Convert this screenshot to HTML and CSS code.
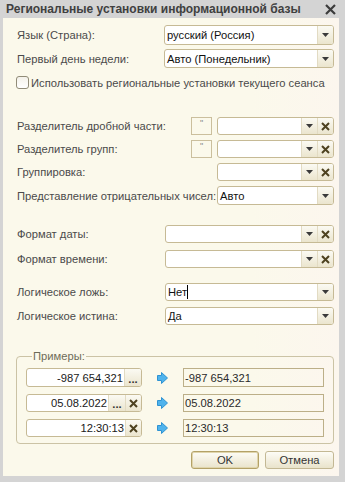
FILE: index.html
```html
<!DOCTYPE html>
<html>
  <head>
    <title>Региональные установки информационной базы</title>
    <link rel="stylesheet" href="styles.css">
  </head>
  <body>
    <div class="window">
      <div class="titlebar">
        <span class="title">Региональные установки информационной базы</span>
        <svg class="close" width="11" height="11" viewBox="0 0 11 11">
          <path d="M1 1l9 9M10 1l-9 9" stroke="#3c3c3c" stroke-width="2.2" />
        </svg>
      </div>

      <div class="content">
        <div class="section top">
          <div class="row tall">
            <span class="label w-147">Язык (Страна):</span>
            <div class="combo w-171">
              <span class="value">русский (Россия)</span>
              <span class="btn"><svg width="7" height="4" viewBox="0 0 7 4"><path d="M0 0h7L3.5 4z" /></svg></span>
            </div>
          </div>
          <div class="row mid">
            <span class="label w-147">Первый день недели:</span>
            <div class="combo w-171">
              <span class="value">Авто (Понедельник)</span>
              <span class="btn"><svg width="7" height="4" viewBox="0 0 7 4"><path d="M0 0h7L3.5 4z" /></svg></span>
            </div>
          </div>
          <label class="check-row">
            <span class="checkbox"></span>
            <span class="label">Использовать региональные установки текущего сеанса</span>
          </label>
        </div>

        <div class="section numbers">
          <div class="row">
            <span class="label w-174">Разделитель дробной части:</span>
            <span class="sample">"</span>
            <div class="combo w-117">
              <span class="value"></span>
              <span class="btn"><svg width="7" height="4" viewBox="0 0 7 4"><path d="M0 0h7L3.5 4z" /></svg></span>
              <span class="btn"><svg width="9" height="9" viewBox="0 0 9 9"><path class="x" d="M1 1l7 7M8 1L1 8" /></svg></span>
            </div>
          </div>
          <div class="row">
            <span class="label w-174">Разделитель групп:</span>
            <span class="sample">"</span>
            <div class="combo w-117">
              <span class="value"></span>
              <span class="btn"><svg width="7" height="4" viewBox="0 0 7 4"><path d="M0 0h7L3.5 4z" /></svg></span>
              <span class="btn"><svg width="9" height="9" viewBox="0 0 9 9"><path class="x" d="M1 1l7 7M8 1L1 8" /></svg></span>
            </div>
          </div>
          <div class="row">
            <span class="label w-200">Группировка:</span>
            <div class="combo w-117">
              <span class="value"></span>
              <span class="btn"><svg width="7" height="4" viewBox="0 0 7 4"><path d="M0 0h7L3.5 4z" /></svg></span>
              <span class="btn"><svg width="9" height="9" viewBox="0 0 9 9"><path class="x" d="M1 1l7 7M8 1L1 8" /></svg></span>
            </div>
          </div>
          <div class="row mid">
            <span class="label w-200">Представление отрицательных чисел:</span>
            <div class="combo w-117">
              <span class="value">Авто</span>
              <span class="btn"><svg width="7" height="4" viewBox="0 0 7 4"><path d="M0 0h7L3.5 4z" /></svg></span>
            </div>
          </div>
        </div>

        <div class="section formats">
          <div class="row">
            <span class="label w-148">Формат даты:</span>
            <div class="combo w-169">
              <span class="value"></span>
              <span class="btn"><svg width="7" height="4" viewBox="0 0 7 4"><path d="M0 0h7L3.5 4z" /></svg></span>
              <span class="btn"><svg width="9" height="9" viewBox="0 0 9 9"><path class="x" d="M1 1l7 7M8 1L1 8" /></svg></span>
            </div>
          </div>
          <div class="row">
            <span class="label w-148">Формат времени:</span>
            <div class="combo w-169">
              <span class="value"></span>
              <span class="btn"><svg width="7" height="4" viewBox="0 0 7 4"><path d="M0 0h7L3.5 4z" /></svg></span>
              <span class="btn"><svg width="9" height="9" viewBox="0 0 9 9"><path class="x" d="M1 1l7 7M8 1L1 8" /></svg></span>
            </div>
          </div>
        </div>

        <div class="section bools">
          <div class="row">
            <span class="label w-148">Логическое ложь:</span>
            <div class="combo w-169">
              <span class="value">Нет<span class="caret"></span></span>
              <span class="btn"><svg width="7" height="4" viewBox="0 0 7 4"><path d="M0 0h7L3.5 4z" /></svg></span>
            </div>
          </div>
          <div class="row">
            <span class="label w-148">Логическое истина:</span>
            <div class="combo w-169">
              <span class="value">Да</span>
              <span class="btn"><svg width="7" height="4" viewBox="0 0 7 4"><path d="M0 0h7L3.5 4z" /></svg></span>
            </div>
          </div>
        </div>

        <fieldset class="examples">
          <legend>Примеры:</legend>
          <div class="example mid">
            <div class="input">
              <span class="value">-987 654,321</span>
              <span class="btn dots">...</span>
            </div>
            <svg class="arrow" width="11" height="12" viewBox="0 0 11 12">
              <path d="M0.5 3.5h4v-3l6 5.5-6 5.5v-3h-4z" />
            </svg>
            <div class="output">-987 654,321</div>
          </div>
          <div class="example">
            <div class="input">
              <span class="value">05.08.2022</span>
              <span class="btn dots">...</span>
              <span class="btn"><svg width="9" height="9" viewBox="0 0 9 9"><path class="x" d="M1 1l7 7M8 1L1 8" /></svg></span>
            </div>
            <svg class="arrow" width="11" height="12" viewBox="0 0 11 12">
              <path d="M0.5 3.5h4v-3l6 5.5-6 5.5v-3h-4z" />
            </svg>
            <div class="output">05.08.2022</div>
          </div>
          <div class="example">
            <div class="input">
              <span class="value">12:30:13</span>
              <span class="btn"><svg width="9" height="9" viewBox="0 0 9 9"><path class="x" d="M1 1l7 7M8 1L1 8" /></svg></span>
            </div>
            <svg class="arrow" width="11" height="12" viewBox="0 0 11 12">
              <path d="M0.5 3.5h4v-3l6 5.5-6 5.5v-3h-4z" />
            </svg>
            <div class="output">12:30:13</div>
          </div>
        </fieldset>

        <div class="buttons">
          <button class="default">OK</button>
          <button>Отмена</button>
        </div>
      </div>
    </div>
  </body>
</html>
```

FILE: styles.css
```css
body {
  margin: 0;
  font-family: "Liberation Sans", Arial, sans-serif;
  font-size: 11.2px;
  color: #4a4a4a;
}

.window {
  width: 345px;
  height: 482px;
  display: flex;
  flex-direction: column;
  background: #d4d4d4;
}

.titlebar {
  height: 18px;
  display: flex;
  align-items: center;
  justify-content: space-between;
  padding: 0 9px 0 6px;
}

.title {
  font-size: 12px;
  font-weight: bold;
  white-space: nowrap;
  color: #404040;
}

.content {
  flex: 1;
  margin: 0 6px 6px 3px;
  padding: 7px 5px 0 14px;
  background: linear-gradient(to right, #fbf9eb 74%, #fcf6ee);
}

.section {
  display: flex;
  flex-direction: column;
  gap: 5px;
}

.section.top {
  gap: 4px;
}

.section.numbers {
  margin-top: 28px;
}

.section.formats {
  margin-top: 20px;
  gap: 7px;
}

.section.bools {
  margin-top: 15px;
  gap: 6px;
}

.row {
  display: flex;
  align-items: center;
  height: 18px;
}

.row.tall {
  height: 20px;
}

.row.mid {
  height: 19px;
}

.label {
  flex: none;
  white-space: nowrap;
}

.w-147 { width: 147px; }
.w-148 { width: 148px; }
.w-174 { width: 174px; }
.w-200 { width: 200px; }

.combo {
  display: flex;
  height: 100%;
  box-sizing: border-box;
  border: 1px solid #c6ba95;
  border-radius: 3px;
  background: #fff;
  overflow: hidden;
  color: #111;
}

.w-171 { width: 171px; }
.w-169 { width: 169px; }
.w-117 { width: 117px; }

.combo .value {
  flex: 1;
  display: flex;
  align-items: center;
  padding-left: 2px;
}

.btn {
  flex: none;
  width: 15px;
  display: flex;
  align-items: center;
  justify-content: center;
  border-left: 1px solid #e2dbc3;
  background: linear-gradient(#fbfaf3, #ebe5ce);
}

.btn path {
  fill: #3a3a3a;
}

.btn path.x {
  fill: none;
  stroke: #4e4220;
  stroke-width: 2;
}

.caret {
  display: inline-block;
  width: 1px;
  height: 14px;
  background: #000;
}

.sample {
  flex: none;
  width: 21px;
  height: 18px;
  box-sizing: border-box;
  margin-right: 5px;
  border: 1px solid #cbbf9d;
  text-align: center;
  font-size: 9px;
  line-height: 11px;
  color: #8a8a8a;
}

.check-row {
  display: flex;
  align-items: center;
  gap: 2px;
  margin-top: 4px;
  margin-left: -1px;
}

.checkbox {
  flex: none;
  width: 13px;
  height: 13px;
  box-sizing: border-box;
  border: 1px solid #918c78;
  border-radius: 3px;
  background: linear-gradient(#f4f2ea, #fff);
}

.examples {
  margin: 25px 0 0 -1px;
  padding: 6px 9px 6px 9px;
  border: 1px solid #cbc3a5;
  border-radius: 4px;
  display: flex;
  flex-direction: column;
  gap: 7px;
}

.examples legend {
  padding: 0 1px;
  margin-left: 6px;
  color: #6e6c58;
}

.example {
  display: flex;
  align-items: center;
  height: 18px;
}

.example.mid {
  height: 19px;
}

.input {
  display: flex;
  width: 116px;
  height: 100%;
  box-sizing: border-box;
  border: 1px solid #c6ba95;
  border-radius: 3px;
  background: #fff;
  overflow: hidden;
  color: #1a1a1a;
}

.input .value {
  flex: 1;
  display: flex;
  align-items: center;
  justify-content: flex-end;
  padding-right: 1px;
}

.btn.dots {
  width: 16px;
  align-items: flex-end;
  font-weight: bold;
  line-height: 14px;
  color: #333;
}

.arrow {
  margin: 0 15px;
}

.arrow path {
  fill: #4fb3ec;
  stroke: #2f93d2;
  stroke-width: 1;
  stroke-linejoin: round;
}

.output {
  width: 141px;
  height: 100%;
  box-sizing: border-box;
  border: 1px solid #bcaf88;
  padding-left: 1px;
  display: flex;
  align-items: center;
  color: #2a2a2a;
}

.buttons {
  display: flex;
  justify-content: flex-end;
  gap: 6px;
  margin-top: 7px;
}

button {
  height: 18px;
  width: 69px;
  padding: 0;
  font-family: inherit;
  font-size: 11.2px;
  color: #333;
  border: 1px solid #c3b894;
  border-radius: 3px;
  background: linear-gradient(#fdfcf6, #e9e3cb);
}

button.default {
  width: 68px;
  border-color: #b3a167;
  box-shadow: inset 0 0 0 1px #e0d5ac;
}
```
